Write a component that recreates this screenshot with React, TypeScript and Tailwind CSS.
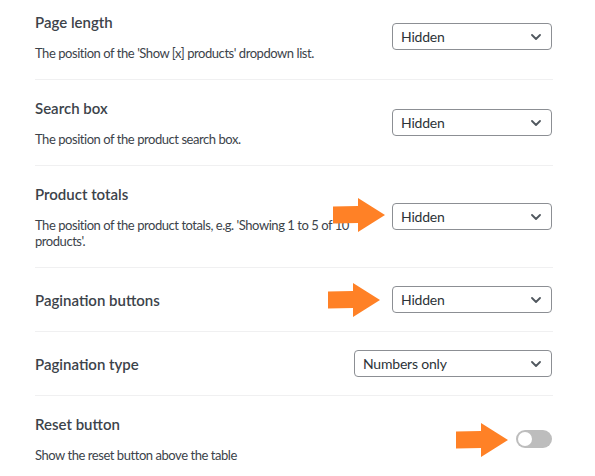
import React from "react";

const Chevron = () => (
  <svg width="10" height="6" viewBox="0 0 10 6" fill="none" className="shrink-0">
    <path d="M1 1 L5 5 L9 1" stroke="#50575e" strokeWidth="1.8" strokeLinecap="round" strokeLinejoin="round" />
  </svg>
);

const Select = ({ value, width }: { value: string; width: string }) => (
  <div
    className={`flex h-[27px] ${width} shrink-0 items-center justify-between rounded-[4px] border border-[#8c8f94] bg-white pl-[8px] pr-[10px]`}
  >
    <span className="text-[14px] leading-[20px] tracking-[-0.2px] text-[#2c3338]">{value}</span>
    <Chevron />
  </div>
);

const Arrow = ({ className }: { className: string }) => (
  <svg className={`absolute ${className}`} width="52" height="34" viewBox="0 0 52 34">
    <polygon points="0,8.5 25,8 25,0 52,17 25,34 25,25 0,25.5" fill="#ff8126" />
  </svg>
);

const Row = ({
  title,
  desc,
  right,
  last,
}: {
  title: string;
  desc?: React.ReactNode;
  right: React.ReactNode;
  last?: boolean;
}) => (
  <div
    className={`flex items-center justify-between py-[18px] pr-[1px] ${last ? "" : "border-b border-[#f0f0f1]"}`}
  >
    <div className="flex flex-col gap-[13px]">
      <div className="text-[15px] font-semibold leading-[20px] text-[#3c434a]">{title}</div>
      {desc && (
        <div className="w-[315px] text-[13px] leading-[16px] tracking-[-0.45px] text-[#3c434a]">{desc}</div>
      )}
    </div>
    {right}
  </div>
);

export default function App() {
  return (
    <div
      className="relative h-[476px] w-[595px] overflow-hidden bg-white"
      style={{ fontFamily: 'Lato, "Noto Sans", sans-serif' }}
    >
      <div className="-mt-[6px] ml-[35px] w-[518px]">
        <Row
          title="Page length"
          desc="The position of the 'Show [x] products' dropdown list."
          right={<Select value="Hidden" width="w-[160px]" />}
        />
        <Row
          title="Search box"
          desc="The position of the product search box."
          right={<Select value="Hidden" width="w-[160px]" />}
        />
        <Row
          title="Product totals"
          desc="The position of the product totals, e.g. 'Showing 1 to 5 of 10 products'."
          right={<Select value="Hidden" width="w-[160px]" />}
        />
        <Row title="Pagination buttons" right={<Select value="Hidden" width="w-[160px]" />} />
        <Row title="Pagination type" right={<Select value="Numbers only" width="w-[198px]" />} />
        <Row
          title="Reset button"
          desc="Show the reset button above the table"
          last
          right={
            <div className="flex h-[18px] w-[36px] shrink-0 items-center rounded-full bg-[#bdbdbd] px-[2px]">
              <div className="h-[14px] w-[14px] rounded-full bg-white" />
            </div>
          }
        />
      </div>
      <Arrow className="left-[333px] top-[198px]" />
      <Arrow className="left-[328px] top-[283px]" />
      <Arrow className="left-[456px] top-[423px]" />
    </div>
  );
}
